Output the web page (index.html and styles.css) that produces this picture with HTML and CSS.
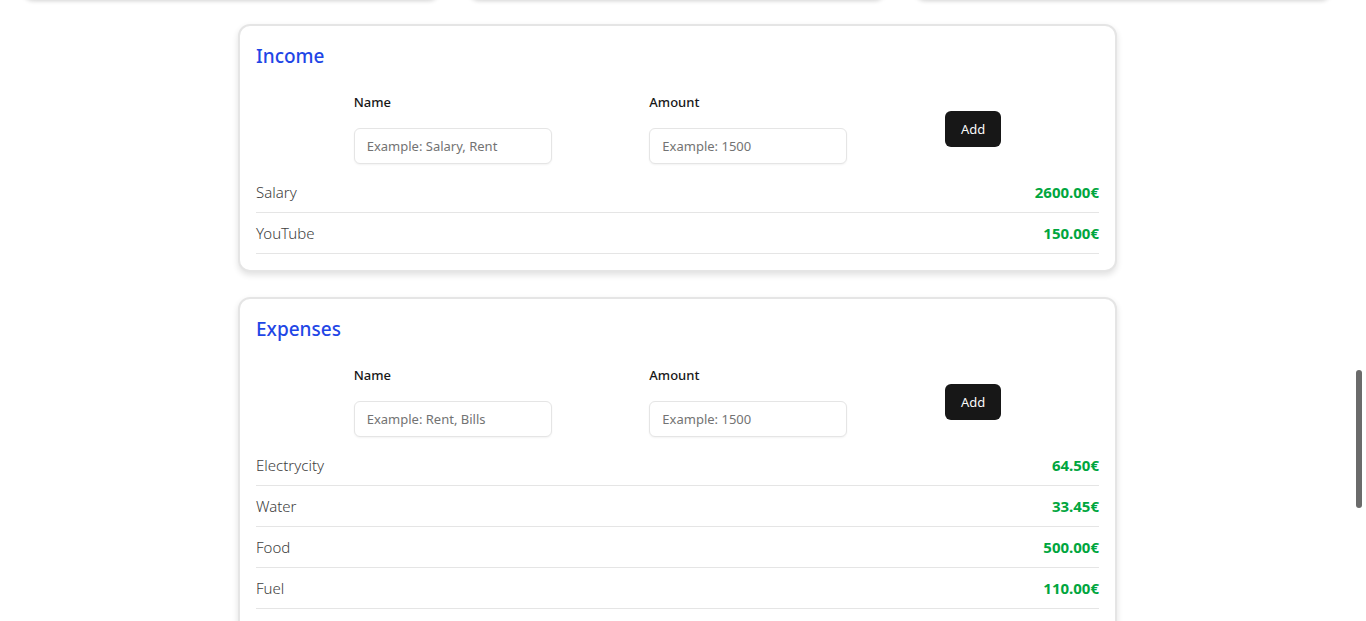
FILE: index.html
```html
<!DOCTYPE html>
<html lang="en">
<head>
  <meta charset="utf-8">
  <meta name="viewport" content="width=device-width, initial-scale=1">
  <title>Budget</title>
  <link rel="stylesheet" href="styles.css">
</head>
<body>
  <div id="app">
    <!-- summary cards (scrolled past) -->
    <div class="summary-row">
      <div class="summary-card"></div>
      <div class="summary-card"></div>
      <div class="summary-card"></div>
    </div>

    <section class="card">
      <h2 class="card-title">Income</h2>
      <form class="entry-form">
        <div class="form-group">
          <label>Name</label>
          <input type="text" placeholder="Example: Salary, Rent">
        </div>
        <div class="form-group">
          <label>Amount</label>
          <input type="text" placeholder="Example: 1500">
        </div>
        <button type="button" class="btn">Add</button>
      </form>
      <ul class="entries">
        <li><span>Salary</span><span class="amount">2600.00€</span></li>
        <li><span>YouTube</span><span class="amount">150.00€</span></li>
      </ul>
    </section>

    <section class="card">
      <h2 class="card-title">Expenses</h2>
      <form class="entry-form">
        <div class="form-group">
          <label>Name</label>
          <input type="text" placeholder="Example: Rent, Bills">
        </div>
        <div class="form-group">
          <label>Amount</label>
          <input type="text" placeholder="Example: 1500">
        </div>
        <button type="button" class="btn">Add</button>
      </form>
      <ul class="entries">
        <li><span>Electrycity</span><span class="amount">64.50€</span></li>
        <li><span>Water</span><span class="amount">33.45€</span></li>
        <li><span>Food</span><span class="amount">500.00€</span></li>
        <li><span>Fuel</span><span class="amount">110.00€</span></li>
        <li><span>Phone</span><span class="amount">25.00€</span></li>
      </ul>
    </section>
  </div>
  <div class="scroll-thumb"></div>
</body>
</html>
```

FILE: styles.css
```css
:root {
  --border: #e5e5e5;
  --text: #171717;
  --muted: #404040;
  --blue: #1f46e6;
  --green: #00a63e;
  --radius: 12px;
}
* { box-sizing: border-box; }
html, body { height: 100%; }
body {
  margin: 0;
  overflow: hidden;
  font-family: "Noto Sans", "Open Sans", sans-serif;
  color: var(--text);
  background: #fff;
}
#app {
  width: 1354px;
  padding: 0 22px;
}
.summary-row {
  display: flex;
  gap: 28px;
  margin-top: -120px;
  margin-bottom: 24px;
}
.summary-card {
  flex: 1;
  height: 120px;
  border-radius: var(--radius);
  background: #fff;
  box-shadow: 0 1px 4px rgba(0, 0, 0, 0.18);
}
.card {
  width: 879px;
  margin: 0 0 25px 216px;
  padding: 16px;
  border: 2px solid var(--border);
  border-radius: var(--radius);
  background: #fff;
  box-shadow: 0 3px 6px rgba(0, 0, 0, 0.12);
}
.card-title {
  margin: 0 0 22px;
  font-size: 19px;
  line-height: 28px;
  font-weight: 500;
  color: var(--blue);
}
.entry-form {
  display: flex;
  align-items: center;
  justify-content: space-evenly;
  margin-bottom: 8px;
}
.form-group label {
  display: block;
  font-size: 13px;
  line-height: 20px;
  font-weight: 500;
  margin-bottom: 16px;
}
.form-group input {
  display: block;
  width: 198px;
  height: 36px;
  padding: 0 12px;
  border: 1px solid var(--border);
  border-radius: 6px;
  box-shadow: 0 1px 2px rgba(0, 0, 0, 0.05);
  font: inherit;
  font-size: 13px;
}
.form-group input::placeholder { color: #737373; }
.btn {
  height: 36px;
  padding: 0 16px;
  border: none;
  border-radius: 6px;
  background: #171717;
  color: #fafafa;
  font: inherit;
  font-size: 13px;
  font-weight: 400;
  margin-top: 2px;
}
.entries {
  list-style: none;
  margin: 0;
  padding: 0;
}
.entries li {
  display: flex;
  justify-content: space-between;
  padding: 8px 0;
  line-height: 24px;
  font-size: 15px;
  border-bottom: 1px solid var(--border);
}
.entries li span:first-child {
  font-weight: 300;
  color: var(--muted);
}
.amount {
  font-weight: 700;
  color: var(--green);
}
.scroll-thumb {
  position: fixed;
  top: 370px;
  right: 4px;
  width: 6px;
  height: 138px;
  border-radius: 3px;
  background: #6b6b6b;
}
```
